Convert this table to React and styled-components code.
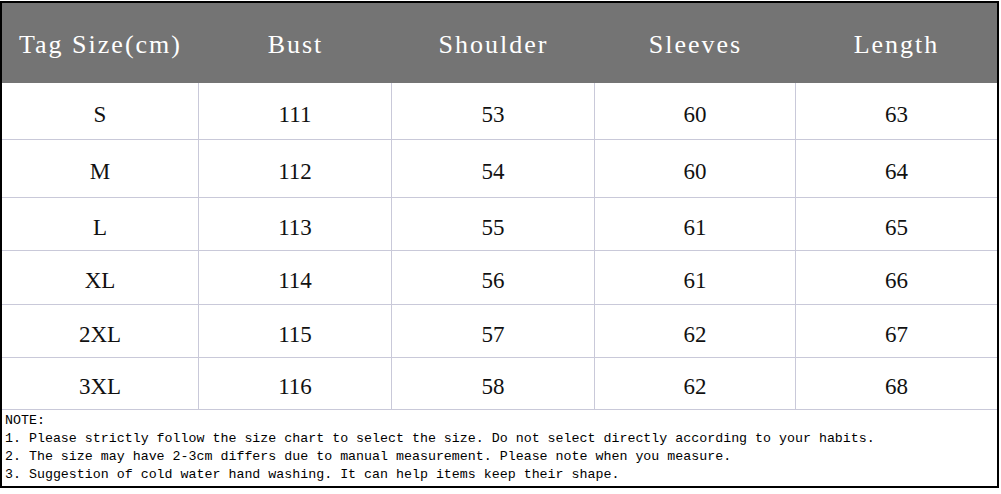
import React from "react";
import styled, { createGlobalStyle } from "styled-components";

const headers = ["Tag Size(cm)", "Bust", "Shoulder", "Sleeves", "Length"];

const rows = [
  { h: 57, cells: ["S", "111", "53", "60", "63"] },
  { h: 58, cells: ["M", "112", "54", "60", "64"] },
  { h: 53, cells: ["L", "113", "55", "61", "65"] },
  { h: 54, cells: ["XL", "114", "56", "61", "66"] },
  { h: 53, cells: ["2XL", "115", "57", "62", "67"] },
  { h: 52, cells: ["3XL", "116", "58", "62", "68"] },
];

const notes = [
  "NOTE:",
  "1. Please strictly follow the size chart to select the size. Do not select directly according to your habits.",
  "2. The size may have 2-3cm differs due to manual measurement. Please note when you measure.",
  "3. Suggestion of cold water hand washing. It can help items keep their shape.",
];

const SizeChart = () => {
  return (
    <ChartWrap>
      <HeaderRow>
        {headers.map((text) => (
          <HeadCell key={text}>{text}</HeadCell>
        ))}
      </HeaderRow>
      {rows.map((row) => (
        <BodyRow key={row.cells[0]} height={row.h}>
          {row.cells.map((value, i) => (
            <BodyCell key={i}>{value}</BodyCell>
          ))}
        </BodyRow>
      ))}
      <NoteBox>
        {notes.map((line) => (
          <NoteLine key={line}>{line}</NoteLine>
        ))}
      </NoteBox>
    </ChartWrap>
  );
};

export default function App() {
  return (
    <>
      <GlobalStyle />
      <SizeChart />
    </>
  );
}

const GlobalStyle = createGlobalStyle`
  html, body {
    margin: 0;
    padding: 0;
    background: #ffffff;
  }
  body {
    font-family: "Liberation Serif", serif;
  }
`;

const ChartWrap = styled.div`
  width: 999px;
  box-sizing: border-box;
  margin-top: 1px;
  border: 2px solid #000;
  background: #fff;
`;

const columns = "197px 193px 203px 201px 1fr";

const HeaderRow = styled.div`
  display: grid;
  grid-template-columns: ${columns};
  height: 80px;
  background: #747474;
`;

const HeadCell = styled.div`
  display: flex;
  align-items: center;
  justify-content: center;
  padding-top: 4px;
  box-sizing: border-box;
  color: #fff;
  font-family: "Liberation Serif", serif;
  font-size: 26px;
  letter-spacing: 2px;
  white-space: nowrap;
`;

const BodyRow = styled.div`
  display: grid;
  grid-template-columns: ${columns};
  height: ${(props) => props.height}px;
  border-bottom: 1px solid #c9c9d9;
  box-sizing: border-box;
`;

const BodyCell = styled.div`
  display: flex;
  align-items: center;
  justify-content: center;
  padding-top: 7px;
  box-sizing: border-box;
  border-right: 1px solid #c9c9d9;
  color: #111;
  font-family: "Liberation Serif", serif;
  font-size: 23px;
  &:last-child {
    border-right: none;
  }
`;

const NoteBox = styled.div`
  padding: 2px 0 4px 3px;
  height: 76px;
  box-sizing: border-box;
`;

const NoteLine = styled.div`
  font-family: "Liberation Mono", monospace;
  font-size: 13.3px;
  line-height: 18px;
  color: #000;
  white-space: nowrap;
`;
